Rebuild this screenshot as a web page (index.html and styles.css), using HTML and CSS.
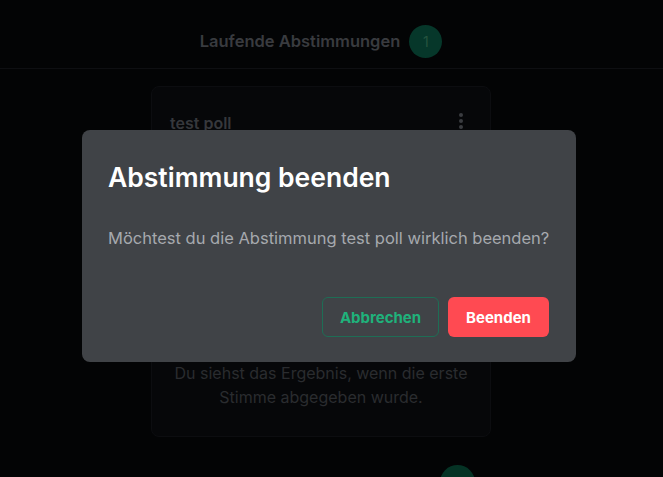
FILE: index.html
```html
<!DOCTYPE html>
<html lang="de">
<head>
<meta charset="utf-8">
<link rel="stylesheet" href="styles.css">
</head>
<body>
<div class="page">
  <header class="topbar">
    <span class="topbar-title">Laufende Abstimmungen</span>
    <span class="badge">1</span>
  </header>
  <main class="content">
    <section class="card">
      <div class="card-head">
        <span class="card-title">test poll</span>
        <svg class="dots" width="6" height="18" viewBox="0 0 6 18"><circle cx="3" cy="3" r="2" fill="#3a3c40"/><circle cx="3" cy="9" r="2" fill="#3a3c40"/><circle cx="3" cy="15" r="2" fill="#3a3c40"/></svg>
      </div>
      <p class="card-note">Du siehst das Ergebnis, wenn die erste Stimme abgegeben wurde.</p>
    </section>
    <div class="next-row"><span class="badge badge-next"></span></div>
  </main>
</div>
<div class="modal">
  <h2 class="modal-title">Abstimmung beenden</h2>
  <p class="modal-text">Möchtest du die Abstimmung test poll wirklich beenden?</p>
  <div class="modal-actions">
    <button class="btn btn-outline">Abbrechen</button>
    <button class="btn btn-danger">Beenden</button>
  </div>
</div>
</body>
</html>
```

FILE: styles.css
```css
* { box-sizing: border-box; }
html, body { margin: 0; padding: 0; }
body {
  background: #030405;
  font-family: Inter, "Noto Sans", sans-serif;
  width: 663px;
  height: 477px;
  overflow: hidden;
}
.page { padding-right: 21px; }
.topbar {
  height: 69px;
  border-bottom: 1px solid #0e0f12;
  display: flex;
  align-items: center;
  justify-content: center;
  gap: 9px;
  margin-right: -21px;
  padding-right: 21px;
  padding-top: 16px;
  padding-bottom: 2px;
}
.topbar-title {
  color: #393b3f;
  font-weight: 600;
  font-size: 16.5px;
}
.badge {
  width: 33px;
  height: 33px;
  border-radius: 50%;
  background: #06372a;
  color: #25543f;
  font-size: 14px;
  display: flex;
  align-items: center;
  justify-content: center;
}
.content {
  display: flex;
  flex-direction: column;
  align-items: center;
  padding-top: 17px;
}
.card {
  width: 340px;
  height: 351px;
  background: #060709;
  border: 1px solid #0c0d10;
  border-radius: 8px;
  padding: 26px 14px 0 14px;
  display: flex;
  flex-direction: column;
}
.card-head {
  display: flex;
  justify-content: space-between;
  align-items: center;
  padding: 0 12px 0 4px;
}
.card-title {
  color: #36383c;
  font-weight: 600;
  font-size: 16px;
}
.dots { margin-top: -4px; }
.card-note {
  margin: 228px 0 0 0;
  text-align: center;
  color: #2a2c2f;
  font-size: 16px;
  line-height: 24px;
}
.next-row {
  width: 340px;
  display: flex;
  justify-content: flex-end;
  padding-right: 16px;
  margin-top: 28px;
}
.badge-next { width: 35px; height: 35px; background: #053325; }
.modal {
  position: fixed;
  left: 82px;
  top: 130px;
  width: 494px;
  height: 232px;
  background: #404347;
  border-radius: 8px;
  padding: 30px 27px 25px 26px;
  display: flex;
  flex-direction: column;
}
.modal-title {
  margin: 0;
  color: #ffffff;
  font-size: 26.5px;
  font-weight: 600;
  line-height: 34px;
}
.modal-text {
  margin: 32px 0 0 0;
  color: #a6a9ae;
  font-size: 16.5px;
  line-height: 24px;
  white-space: nowrap;
}
.modal-actions {
  margin-top: auto;
  display: flex;
  justify-content: flex-end;
  gap: 9px;
}
.btn {
  height: 40px;
  border-radius: 6px;
  font-family: Inter, "Noto Sans", sans-serif;
  font-size: 15px;
  font-weight: 700;
  padding: 0 10px;
  cursor: pointer;
}
.btn-outline {
  background: transparent;
  border: 1px solid #1e6d55;
  color: #1fb27b;
  width: 117px;
}
.btn-danger {
  background: #ff4a52;
  border: none;
  color: #ffffff;
  width: 101px;
}
```
